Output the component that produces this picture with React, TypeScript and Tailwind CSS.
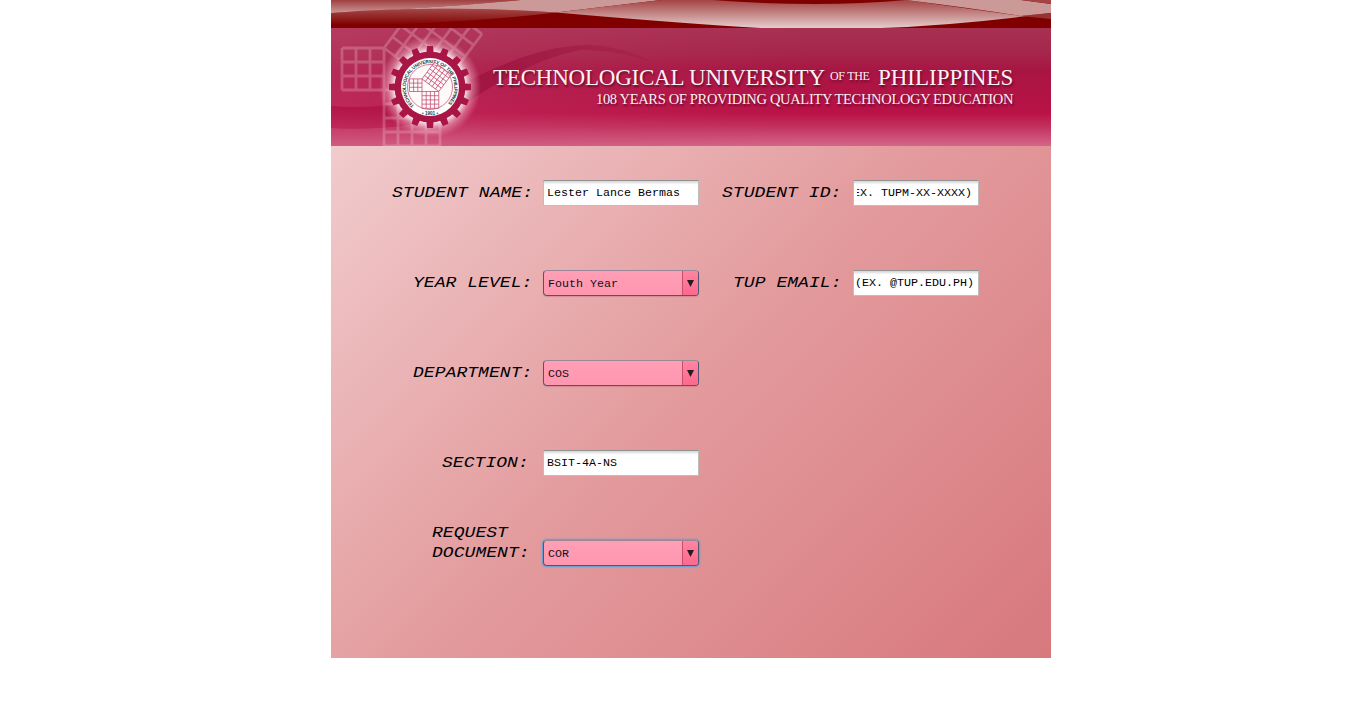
import React from "react";

function gridPath(n: number) {
  let d = "";
  for (let i = 0; i <= n; i++) {
    d += `M${i} 0V${n}M0 ${i}H${n}`;
  }
  return d;
}

/* Three squares on the sides of a 3-4-5 triangle. */
function Pythagoras({ x, y, unit, stroke, width }: { x: number; y: number; unit: number; stroke: string; width: number }) {
  return (
    <g transform={`translate(${x} ${y}) scale(${unit})`} stroke={stroke} strokeWidth={width} fill="none">
      <path d={gridPath(3)} transform="translate(-3 -3)" />
      <path d={gridPath(4)} />
      <path d={gridPath(5)} transform="matrix(.8 .6 .6 -.8 0 -3)" />
    </g>
  );
}

function Waves() {
  return (
    <svg className="block h-7 w-[720px] shrink-0" viewBox="0 0 720 28">
      <defs>
        <linearGradient id="haze" gradientUnits="userSpaceOnUse" x1="0" y1="0" x2="0" y2="28">
          <stop offset="0" stopColor="#a44444" />
          <stop offset="1" stopColor="#e6cccc" />
        </linearGradient>
        <linearGradient id="fade" gradientUnits="userSpaceOnUse" x1="0" y1="8" x2="0" y2="25">
          <stop offset="0" stopColor="#a64c4c" />
          <stop offset="1" stopColor="#800000" />
        </linearGradient>
        <linearGradient id="hazeLeft" gradientUnits="userSpaceOnUse" x1="0" y1="0" x2="0" y2="13">
          <stop offset="0" stopColor="#a04040" />
          <stop offset="1" stopColor="#cc9696" />
        </linearGradient>
      </defs>
      <rect width="720" height="28" fill="#800000" />
      <path d="M0 0H190Q100 9 0 12Z" fill="url(#hazeLeft)" />
      <path d="M0 13Q110 5 225 12.500Q130 24 0 26Z" fill="url(#fade)" />
      <path d="M0 11.500Q100 9 190 0H330L225 12.500Q110 5 0 13Z" fill="#cc9999" />
      <path d="M225 12.500L330 0H381Q490 8 575 0L690 16L720 13Q630 25 550 28H430Q345 23 225 12.500Z" fill="url(#haze)" />
      <path d="M575 0H690L720 4V13L690 16Q640 8 575 0Z" fill="#cc9999" />
      <path d="M690 0H720V4Z" fill="#a44444" />
      <path d="M690 16L720 13V19Z" fill="#993333" />
    </svg>
  );
}

function BannerArt() {
  return (
    <svg className="absolute inset-0 h-[118px] w-[720px]" viewBox="0 0 720 118">
      <defs>
        <linearGradient id="banner" x1="0" y1="0" x2="0" y2="1">
          <stop offset="0" stopColor="#a83053" />
          <stop offset=".22" stopColor="#a5264b" />
          <stop offset=".36" stopColor="#a81543" />
          <stop offset=".72" stopColor="#b91247" />
          <stop offset=".82" stopColor="#c12c5a" />
          <stop offset="1" stopColor="#d4668a" />
        </linearGradient>
        <linearGradient id="leftLight" x1="0" y1="0" x2="1" y2="0">
          <stop offset="0" stopColor="#c94a76" stopOpacity=".4" />
          <stop offset="1" stopColor="#c23c66" stopOpacity="0" />
        </linearGradient>
        <linearGradient id="lowerBand" x1="0" y1="0" x2="0" y2="1">
          <stop offset="0" stopColor="#b00c3f" />
          <stop offset="1" stopColor="#c42a5c" />
        </linearGradient>
        <linearGradient id="arc" x1="0" y1="0" x2="1" y2="0">
          <stop offset="0" stopColor="#a80f40" stopOpacity=".4" />
          <stop offset=".5" stopColor="#9e1440" stopOpacity=".85" />
          <stop offset="1" stopColor="#9e1a45" stopOpacity=".3" />
        </linearGradient>
        <radialGradient id="glow">
          <stop offset=".7" stopColor="#fff" stopOpacity=".85" />
          <stop offset=".82" stopColor="#f9cbd9" stopOpacity=".45" />
          <stop offset="1" stopColor="#f0a0ba" stopOpacity="0" />
        </radialGradient>
        <path id="sealText" d="M83.200 77.700A24.200 24.200 0 1 1 114.800 77.700" />
      </defs>
      <rect width="720" height="118" fill="url(#banner)" />
      <rect width="480" height="118" fill="url(#leftLight)" />
      <path d="M0 78Q50 82 100 69L149 47Q209 18 255 17Q295 18 325 36Q290 22 250 22Q205 30 149 66Q110 95 60 99Q30 102 0 100Z" fill="url(#arc)" />
      <path d="M0 78Q40 82 75 76V97Q40 102 0 100Z" fill="url(#lowerBand)" opacity=".6" />
      <g opacity=".25">
        <Pythagoras x={53} y={62} unit={14} stroke="#fcd8e2" width={0.2} />
      </g>
      <circle cx="99" cy="59" r="51" fill="url(#glow)" />
      <g fill="#a91645">
        {Array.from({ length: 16 }, (_, i) => (
          <path key={i} d="M95.300 26L96 18H102L102.700 26Z" transform={`rotate(${i * 22.5} 99 59)`} />
        ))}
        <circle cx="99" cy="59" r="35.500" />
      </g>
      <circle cx="99" cy="59" r="29" fill="#fff" />
      <circle cx="99" cy="59" r="22.500" fill="#fffafa" stroke="#cf5a7c" strokeWidth=".8" />
      <text fontFamily="Liberation Sans" fontWeight="700" fontSize="4.800" fill="#183c3b">
        <textPath href="#sealText" textLength="114" lengthAdjust="spacing">TECHNOLOGICAL UNIVERSITY OF THE PHILIPPINES</textPath>
      </text>
      <text x="99" y="86.500" textAnchor="middle" fontFamily="Liberation Sans" fontWeight="700" fontSize="4.600" fill="#183c3b">• 1901 •</text>
      <Pythagoras x={91} y={63.500} unit={4.2} stroke="#c04068" width={0.17} />
    </svg>
  );
}

function Label({ children, className }: { children: React.ReactNode; className: string }) {
  return (
    <div className={`shrink-0 font-['Liberation_Mono',monospace] text-[18px] leading-5 whitespace-pre text-black italic ${className}`}>
      {React.Children.map(children, (line) => (
        <span className="block origin-[0_65%] scale-y-[.86] tracking-[0.05px]">{line}</span>
      ))}
    </div>
  );
}

function Field({ value, className }: { value: string; className: string }) {
  return (
    <div className={`h-[26px] shrink-0 border border-[#bdbdbd] border-t-[#929292] bg-white bg-linear-to-b from-[#d4d4d4] from-0% to-white to-15% pt-1 ${className}`}>
      <div className="flex overflow-hidden font-['Liberation_Mono',monospace] text-[11.67px] leading-4 whitespace-pre text-black">
        <span className="shrink-0">{value}</span>
      </div>
    </div>
  );
}

function Combo({ value, focused = false }: { value: string; focused?: boolean }) {
  return (
    <div className={`flex h-[26px] w-[156px] shrink-0 overflow-hidden rounded-[4px] border border-[#50566f] border-t-[#9c8797] bg-linear-to-b from-[#ff9fb6] to-[#ff96b0] ${focused ? "shadow-[0_0_0_1px_#6f9fcc,0_0_2px_1px_#6f9fcc]" : "shadow-[0_1px_1px_#bd7a8088]"}`}>
      <div className="flex-1 pt-[5px] pl-1 font-['Liberation_Mono',monospace] text-[11.67px] leading-4 text-[#191012]">{value}</div>
      <div className="flex w-4 justify-center border-l border-[#c5506f] bg-linear-to-b from-[#ff85a1] to-[#ff688e] pt-[9px]">
        <svg className="h-[7px] w-[7px]" viewBox="0 0 7 7">
          <path d="M0 0H7L3.500 7Z" fill="#241c20" />
        </svg>
      </div>
    </div>
  );
}

export default function App() {
  return (
    <div className="min-h-[713px] bg-white pl-[331px]">
      <main className="flex h-[658px] w-[720px] flex-col overflow-hidden">
        <Waves />
        <header className="relative h-[118px] shrink-0">
          <BannerArt />
          <div className="relative flex flex-col items-end pt-[36px] pr-[38px] font-['Liberation_Serif',serif] whitespace-nowrap text-[#fff0f4] [text-shadow:1px_2px_2px_#650b2b]">
            <h1 className="flex text-[23px] leading-[28px]">
              <span className="w-[337px] tracking-[-0.22px]">TECHNOLOGICAL UNIVERSITY</span>
              <span className="w-[48px] text-[12px] leading-6 tracking-[-0.3px]">OF THE</span>
              <span className="w-[135px] tracking-[-0.02px]">PHILIPPINES</span>
            </h1>
            <p className="-mt-px w-[417px] text-[14.5px] leading-4 tracking-[-0.33px]">108 YEARS OF PROVIDING QUALITY TECHNOLOGY EDUCATION</p>
          </div>
        </header>
        <form className="flex flex-1 flex-col gap-16 bg-linear-[135deg,#f1cbcd_0%,#e39b9d_48%,#d7787d_100%] pt-[34px]">
          <div className="flex">
            <Label className="w-[212px] pt-[2px] pl-[61px]">STUDENT NAME:</Label>
            <Field className="w-[156px] px-[3px]" value="Lester Lance Bermas" />
            <Label className="w-[154px] pt-[2px] pl-[23px]">STUDENT ID:</Label>
            <div className="flex h-[26px] w-[126px] shrink-0 border border-[#bdbdbd] border-t-[#929292] bg-white bg-linear-to-b from-[#d4d4d4] from-0% to-white to-15% px-[3px] pt-1">
              <div className="flex min-w-0 flex-1 justify-end overflow-hidden pr-[3px] font-['Liberation_Mono',monospace] text-[11.67px] leading-4 whitespace-pre text-black">
                <span className="shrink-0">(EX. TUPM-XX-XXXX)</span>
              </div>
            </div>
          </div>
          <div className="flex">
            <Label className="w-[212px] pt-[2px] pl-[82px]">YEAR LEVEL:</Label>
            <Combo value="Fouth Year" />
            <Label className="w-[154px] pt-[2px] pl-[34px]">TUP EMAIL:</Label>
            <Field className="w-[126px] pl-px" value="(EX. @TUP.EDU.PH)" />
          </div>
          <div className="flex">
            <Label className="w-[212px] pt-[2px] pl-[82px]">DEPARTMENT:</Label>
            <Combo value="COS" />
          </div>
          <div className="flex">
            <Label className="w-[212px] pt-[2px] pl-[111px]">SECTION:</Label>
            <Field className="w-[156px] px-[3px]" value="BSIT-4A-NS" />
          </div>
          <div className="-mt-[18px] flex">
            <Label className="w-[212px] pl-[101px]">
              {"REQUEST"}
              {"DOCUMENT:"}
            </Label>
            <div className="pt-[18px]">
              <Combo value="COR" focused />
            </div>
          </div>
        </form>
      </main>
    </div>
  );
}
